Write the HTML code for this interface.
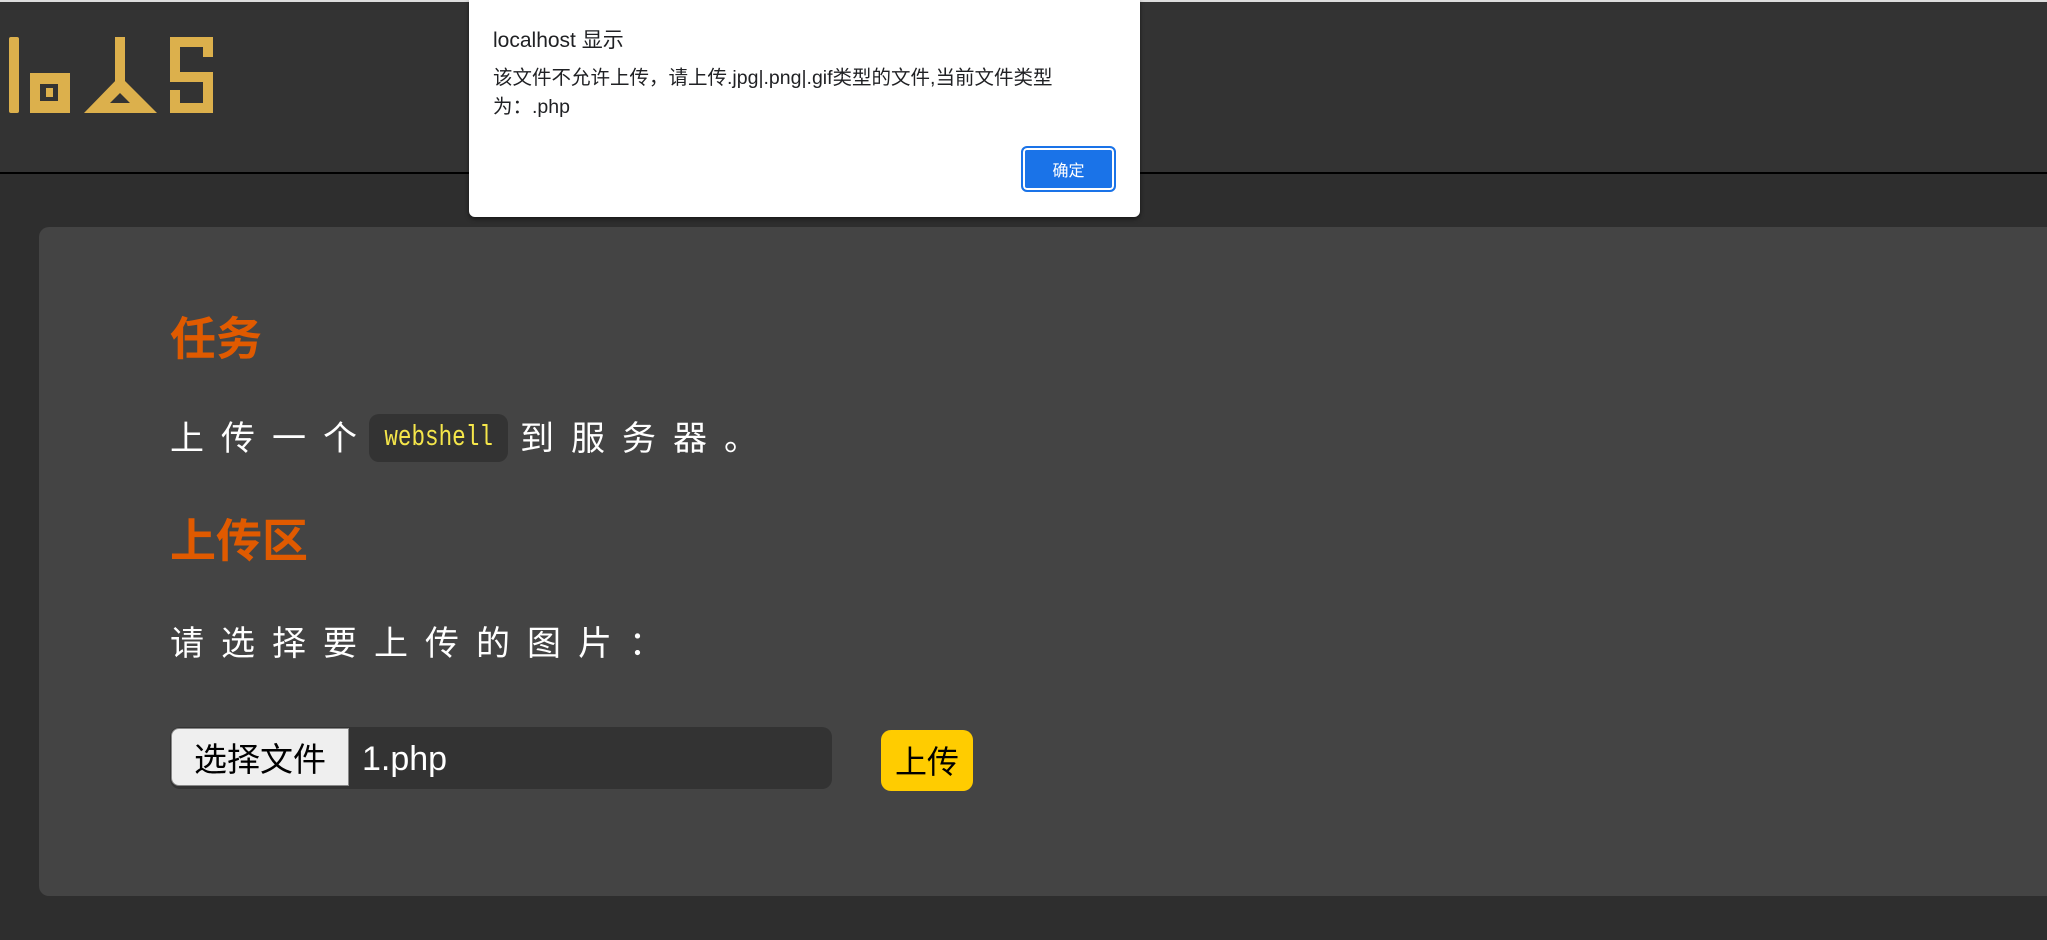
<!DOCTYPE html>
<html><head><meta charset="utf-8"><style>
html,body{margin:0;padding:0;width:2047px;height:940px;overflow:hidden;background:#2e2e2e;font-family:"Liberation Sans","Noto Sans CJK SC",sans-serif;}
.top{position:absolute;left:0;top:0;width:2047px;height:172px;background:#333;border-top:2px solid #ddd;box-sizing:border-box;}
.hdrline{position:absolute;left:0;top:172px;width:2047px;height:2px;background:#000}
.panel{position:absolute;left:39px;top:227px;width:2100px;height:669px;background:#444;border-radius:10px;}
.h{position:absolute;left:170px;color:#e05a00;font-weight:bold;font-size:46px;font-family:"Noto Sans CJK SC",sans-serif;line-height:1;}
.t{position:absolute;left:170px;color:#fff;font-size:34px;letter-spacing:17px;font-family:"Noto Sans CJK SC",sans-serif;line-height:1;white-space:nowrap;font-weight:400}
.code{position:absolute;left:369px;top:414px;width:139px;height:48px;background:#333;border-radius:10px;color:#f5e64a;font-family:"Liberation Mono",monospace;font-size:29px;line-height:48px;text-align:center;}
.code span{display:inline-block;transform:scaleX(0.78);}
.file{position:absolute;left:170px;top:727px;width:662px;height:62px;background:#333;border-radius:10px;}
.fbtn{position:absolute;left:171px;top:728px;width:178px;height:58px;background:#efefef;border:1px solid #888;border-radius:8px 0 0 8px;box-sizing:border-box;font-size:33px;color:#000;text-align:center;line-height:56px;font-family:"Noto Sans CJK SC",sans-serif;}
.fname{position:absolute;left:362px;top:728px;line-height:62px;color:#fff;font-size:34px;}
.up{position:absolute;left:881px;top:730px;width:92px;height:61px;background:#fc0;border-radius:10px;text-align:center;line-height:61px;font-size:32px;color:#000;font-family:"Noto Sans CJK SC",sans-serif;}
.dlg{position:absolute;left:469px;top:0;width:671px;height:217px;background:#fff;border-radius:0 0 6px 6px;box-shadow:0 2px 4px rgba(0,0,0,.5);}
.dt{position:absolute;left:24px;top:24px;font-size:21px;color:#202124;font-family:"Liberation Sans","Noto Sans CJK SC",sans-serif;}
.dm{position:absolute;left:24px;top:64px;width:600px;font-size:19.5px;line-height:29px;color:#202124;font-family:"Liberation Sans","Noto Sans CJK SC",sans-serif;}
.ok{position:absolute;left:552px;top:146px;width:95px;height:46px;box-sizing:border-box;background:#1a73e8;border:2px solid #1a73e8;box-shadow:inset 0 0 0 2px #fff;border-radius:6px;color:#fff;font-size:16px;text-align:center;line-height:42px;font-family:"Noto Sans CJK SC",sans-serif;}
</style></head><body>
<div class="top"></div>
<div class="hdrline"></div>
<svg style="position:absolute;left:0;top:0" width="240" height="130">
<g fill="#dcb04c">
<rect x="9" y="37" width="10" height="76" rx="2"/>
<path fill-rule="evenodd" d="M30 73h40v40h-40z M40 84v17h18v-17z"/>
<rect x="46" y="88" width="7" height="9"/>
<rect x="115" y="37" width="10" height="45"/>
<path fill-rule="evenodd" d="M120 76L157 113H84Z M120 93L110 103H130Z"/>
<path d="M170 37h43v20h-10v-10h-23v25h33v41h-43v-23h10v13h23v-21h-33z"/>
</g></svg>
<div class="panel"></div>
<div class="h" style="top:313px">任务</div>
<div class="t" style="top:419px">上传一个</div>
<div class="code"><span>webshell</span></div>
<div class="t" style="left:520px;top:419px">到服务器。</div>
<div class="h" style="top:515px">上传区</div>
<div class="t" style="top:624px">请选择要上传的图片：</div>
<div class="file"></div>
<div class="fbtn">选择文件</div>
<div class="fname">1.php</div>
<div class="up">上传</div>
<div class="dlg">
<div class="dt">localhost 显示</div>
<div class="dm">该文件不允许上传，请上传.jpg|.png|.gif类型的文件,当前文件类型为：.php</div>
<div class="ok">确定</div>
</div>
</body></html>
